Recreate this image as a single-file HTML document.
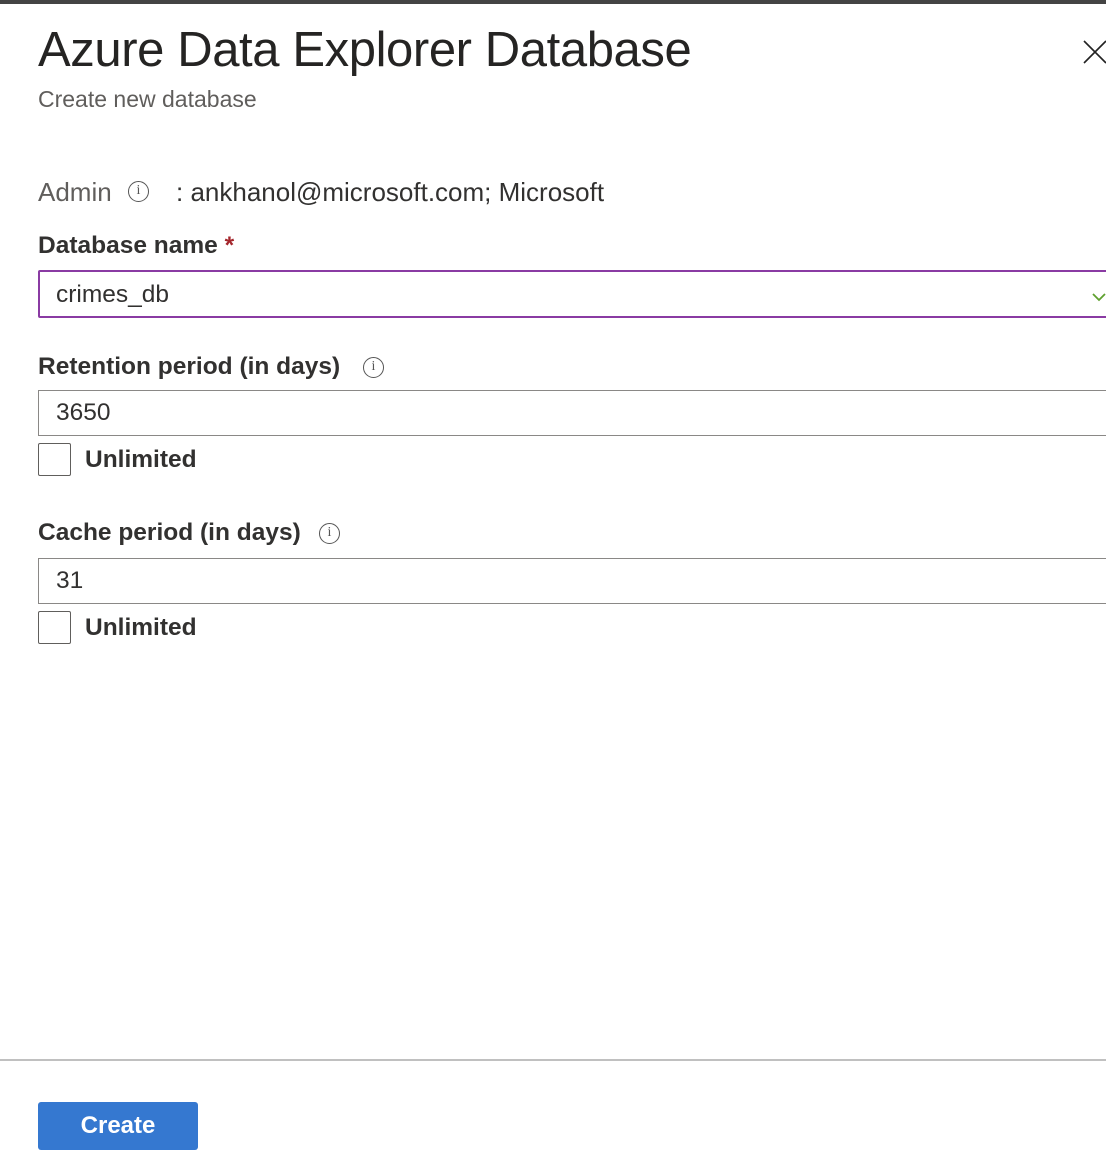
<!DOCTYPE html>
<html><head><meta charset="utf-8"><style>
body{margin:0;width:1106px;height:1168px;background:#fff;font-family:"Liberation Sans",sans-serif;color:#323130;position:relative;overflow:hidden}
.a{position:absolute;white-space:nowrap}
.info{display:inline-block;width:21px;height:21px;border:1.5px solid #555;border-radius:50%;box-sizing:border-box;font-size:14px;line-height:18px;text-align:center;color:#555;font-family:"Liberation Serif",serif}
.inp{position:absolute;left:38px;width:1100px;border:1px solid #8a8886;box-sizing:border-box;font-size:24.5px;padding-left:17px}
.cb{position:absolute;left:38px;width:33px;height:33px;border:1px solid #605e5c;box-sizing:border-box;border-radius:2px}
.lbl{font-size:24.5px;color:#323130;font-weight:bold}
</style></head><body>
<div class="a" style="left:0;top:0;width:1106px;height:4px;background:#444"></div>
<div class="a" style="left:38px;top:22px;font-size:49px;letter-spacing:-0.4px;color:#252423">Azure Data Explorer Database</div>
<svg class="a" style="left:1083px;top:40px" width="24" height="24"><path d="M1 1L23 23M23 1L1 23" stroke="#222" stroke-width="1.6"/></svg>
<div class="a" style="left:38px;top:86px;font-size:23px;color:#605e5c">Create new database</div>
<div class="a" style="left:38px;top:177px;font-size:26px;color:#605e5c">Admin</div>
<div class="a" style="left:128px;top:181px"><span class="info">i</span></div>
<div class="a" style="left:176px;top:177px;font-size:26px;color:#323130">: ankhanol@microsoft.com; Microsoft</div>
<div class="a lbl" style="left:38px;top:232px">Database name <span style="color:#a4262c">*</span></div>
<div class="inp" style="top:270px;height:48px;line-height:46px;border:2px solid #8a3ba3;border-radius:2px;padding-left:16px">crimes_db</div>
<svg class="a" style="left:1092px;top:292px" width="14" height="10"><path d="M1 2L7 8L13 2" stroke="#5ea02e" stroke-width="1.8" fill="none"/></svg>
<div class="a lbl" style="left:38px;top:353px">Retention period (in days)</div>
<div class="a" style="left:363px;top:357px"><span class="info">i</span></div>
<div class="inp" style="top:390px;height:46px;line-height:44px">3650</div>
<div class="cb" style="top:443px"></div>
<div class="a lbl" style="left:85px;top:446px">Unlimited</div>
<div class="a lbl" style="left:38px;top:519px">Cache period (in days)</div>
<div class="a" style="left:319px;top:523px"><span class="info">i</span></div>
<div class="inp" style="top:558px;height:46px;line-height:44px">31</div>
<div class="cb" style="top:611px"></div>
<div class="a lbl" style="left:85px;top:614px">Unlimited</div>
<div class="a" style="left:0;top:1059px;width:1106px;height:2px;background:#c0c0c0"></div>
<div class="a" style="left:38px;top:1102px;width:160px;height:48px;background:#3578d0;border-radius:3px;color:#fff;font-size:24px;font-weight:bold;text-align:center;line-height:48px">Create</div>
</body></html>
